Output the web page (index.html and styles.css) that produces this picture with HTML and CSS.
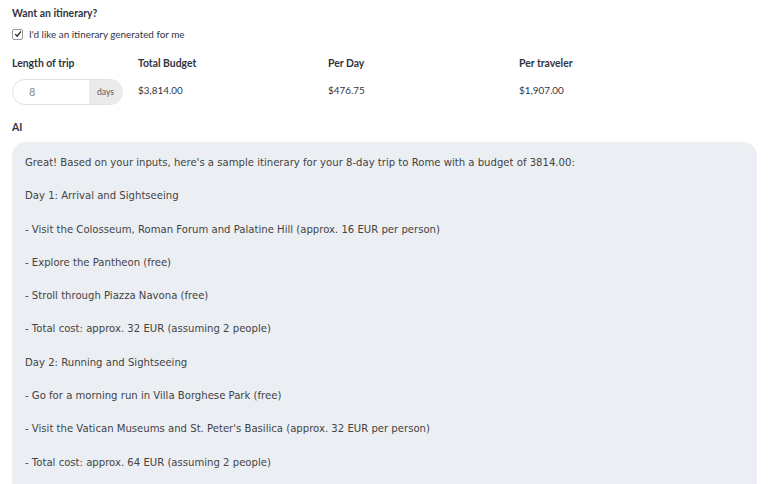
FILE: index.html
```html
<!DOCTYPE html>
<html>
<head>
<meta charset="utf-8">
<link rel="stylesheet" href="styles.css">
</head>
<body>
<div class="page">
  <div class="label">Want an itinerary?</div>
  <label class="check">
    <span class="box"><svg viewBox="0 0 10 10" width="8" height="8"><path d="M1.5 5.2 L4 7.8 L8.6 1.8" fill="none" stroke="#222" stroke-width="1.6"/></svg></span>
    <span>I'd like an itinerary generated for me</span>
  </label>
  <div class="stats">
    <div class="stat">
      <div class="label">Length of trip</div>
      <div class="pill"><span class="pill-val">8</span><span class="pill-unit">days</span></div>
    </div>
    <div class="stat">
      <div class="label">Total Budget</div>
      <div class="val">$3,814.00</div>
    </div>
    <div class="stat">
      <div class="label">Per Day</div>
      <div class="val">$476.75</div>
    </div>
    <div class="stat">
      <div class="label">Per traveler</div>
      <div class="val">$1,907.00</div>
    </div>
  </div>
  <div class="label ai">AI</div>
  <div class="bubble">
    <p>Great! Based on your inputs, here's a sample itinerary for your 8-day trip to Rome with a budget of 3814.00:</p>
    <p>Day 1: Arrival and Sightseeing</p>
    <p>- Visit the Colosseum, Roman Forum and Palatine Hill (approx. 16 EUR per person)</p>
    <p>- Explore the Pantheon (free)</p>
    <p>- Stroll through Piazza Navona (free)</p>
    <p>- Total cost: approx. 32 EUR (assuming 2 people)</p>
    <p>Day 2: Running and Sightseeing</p>
    <p>- Go for a morning run in Villa Borghese Park (free)</p>
    <p>- Visit the Vatican Museums and St. Peter's Basilica (approx. 32 EUR per person)</p>
    <p>- Total cost: approx. 64 EUR (assuming 2 people)</p>
  </div>
</div>
</body>
</html>
```
FILE: styles.css
```css
html, body { margin: 0; padding: 0; background: #fff; overflow: hidden; }
.page {
  padding: 7px 11px 0 12px;
  font-family: "Lato", "Open Sans", sans-serif;
  color: #31333f;
}
.label {
  font-weight: 700;
  font-size: 10.4px;
  line-height: 12px;
  color: #31333f;
}
.check {
  display: flex;
  align-items: center;
  gap: 6px;
  margin-top: 9px;
  font-size: 9.9px;
  line-height: 12px;
}
.box {
  width: 9px; height: 9px;
  border: 1px solid #9a9a9a;
  border-radius: 2px;
  background: #fff;
  display: flex; align-items: center; justify-content: center;
}
.stats {
  display: grid;
  grid-template-columns: 126px 190px 191px 1fr;
  margin-top: 17px;
}
.stat .label { margin-bottom: 10px; }
.val { font-size: 9.9px; line-height: 12px; margin-top: 15px; }
.pill {
  display: flex;
  width: 111px;
  height: 26px;
  box-sizing: border-box;
  border: 1px solid #e3e3e3;
  border-radius: 13px;
  overflow: hidden;
}
.pill-val {
  flex: 1;
  padding-left: 16px;
  font-size: 11px;
  line-height: 24px;
  color: #888;
}
.pill-unit {
  width: 33px;
  background: #ebebeb;
  font-size: 8.5px;
  line-height: 24px;
  text-align: center;
  color: #555;
}
.ai { margin-top: 16px; }
.bubble {
  margin-top: 9px;
  background: #ebeef3;
  border-radius: 14px;
  padding: 13px 13px 10px;
  font-family: "DejaVu Sans", sans-serif;
  font-size: 10.1px;
  color: #444;
}
.bubble p { margin: 0 0 17.3px; line-height: 16px; }
```
